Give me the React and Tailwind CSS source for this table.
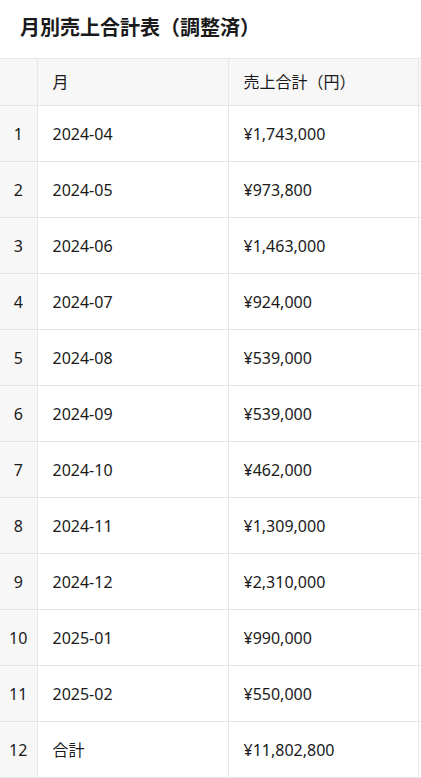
import React from 'react';

const rows = [
  ['2024-04', '¥1,743,000'],
  ['2024-05', '¥973,800'],
  ['2024-06', '¥1,463,000'],
  ['2024-07', '¥924,000'],
  ['2024-08', '¥539,000'],
  ['2024-09', '¥539,000'],
  ['2024-10', '¥462,000'],
  ['2024-11', '¥1,309,000'],
  ['2024-12', '¥2,310,000'],
  ['2025-01', '¥990,000'],
  ['2025-02', '¥550,000'],
  ['合計', '¥11,802,800'],
];

export default function App() {
  return (
    <div
      className="min-h-screen bg-white text-[#1a1a1a] overflow-hidden [text-spacing-trim:space-all]"
      style={{ fontFamily: '"Noto Sans", "Noto Sans CJK JP", sans-serif' }}
    >
      {/* Title */}
      <div className="px-5 h-[58px] flex items-center">
        <h1 className="text-[20px] font-bold leading-none pb-[2px]">月別売上合計表（調整済）</h1>
      </div>

      {/* Table */}
      <table className="border-collapse table-fixed w-[520px] text-[16px]">
        <colgroup>
          <col className="w-[37px]" />
          <col className="w-[191px]" />
          <col className="w-[190px]" />
          <col className="w-[102px]" />
        </colgroup>
        <thead>
          <tr className="bg-[#f7f7f7] h-[47px]">
            <th className="border border-[#e6e6e6] border-l-0 font-normal"></th>
            <th className="border border-[#e6e6e6] font-normal text-left pl-[15px]">月</th>
            <th className="border border-[#e6e6e6] font-normal text-left pl-[15px]">売上合計（円）</th>
            <th className="border border-[#e6e6e6] font-normal"></th>
          </tr>
        </thead>
        <tbody>
          {rows.map(([month, total], i) => (
            <tr key={i} className="h-[56px]">
              <td className="border border-[#e6e6e6] border-l-0 bg-[#f7f7f7] text-center">{i + 1}</td>
              <td className="border border-[#e6e6e6] pl-[15px]">{month}</td>
              <td className="border border-[#e6e6e6] pl-[15px]">{total}</td>
              <td className="border border-[#e6e6e6]"></td>
            </tr>
          ))}
        </tbody>
      </table>
    </div>
  );
}
